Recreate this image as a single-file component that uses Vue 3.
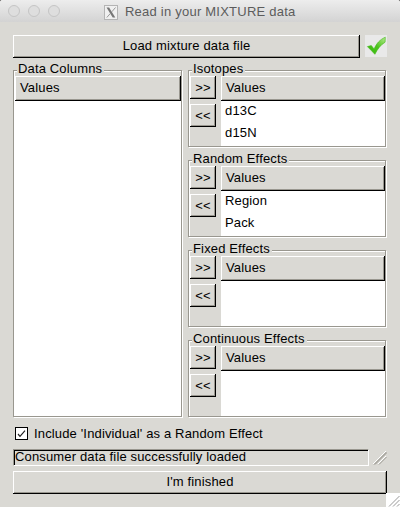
<script setup>
const groups = [
  { title: 'Isotopes', items: ['d13C', 'd15N'] },
  { title: 'Random Effects', items: ['Region', 'Pack'] },
  { title: 'Fixed Effects', items: [] },
  { title: 'Continuous Effects', items: [] },
]
</script>

<template>
  <div class="window">
    <header class="titlebar">
      <i class="light"></i><i class="light"></i><i class="light"></i>
      <svg class="xicon" width="14" height="15" viewBox="0 0 14 15">
        <rect x=".5" y=".5" width="13" height="14" fill="#f0f0f0" stroke="#b4b4b4" />
        <path d="M2.5 2.5h2.6l6.2 10H8.7z" fill="#777" />
        <path d="M11.5 2.5L7.8 6.8M6.3 8.5L2.8 12.5" stroke="#999" fill="none" />
      </svg>
      <span class="title">Read in your MIXTURE data</span>
    </header>
    <main class="content">
      <div class="load-row">
        <button class="btn load">Load mixture data file</button>
        <svg width="22" height="22" viewBox="0 0 22 22">
          <defs>
            <linearGradient id="tick" x1="0" y1="1" x2="1" y2="0">
              <stop offset="0" stop-color="#35b80c" /><stop offset=".5" stop-color="#4cc41c" /><stop offset="1" stop-color="#b4eb8c" />
            </linearGradient>
          </defs>
          <rect width="22" height="22" fill="#e9e9e9" />
          <path d="M2.4 11.6L6.3 10.5L9.1 14C11.5 8.5 14.5 4.8 20.3 2.2L20.1 7.2C15.7 9.7 12.6 14 9.9 19.3C7.8 17.2 5 14.1 2.4 11.6Z" fill="url(#tick)" stroke="#43b51b" stroke-width=".6" />
        </svg>
      </div>
      <div class="panels">
        <section class="panel">
          <span class="legend">Data Columns</span>
          <div class="list"><div class="head">Values</div></div>
        </section>
        <div class="stack">
          <section v-for="g in groups" :key="g.title" class="panel">
            <span class="legend">{{ g.title }}</span>
            <div class="moves">
              <button class="btn">&gt;&gt;</button>
              <button class="btn">&lt;&lt;</button>
            </div>
            <div class="list">
              <div class="head">Values</div>
              <div v-for="i in g.items" :key="i" class="item">{{ i }}</div>
            </div>
          </section>
        </div>
      </div>
      <label class="check">
        <svg width="13" height="13" viewBox="0 0 13 13">
          <rect x=".5" y=".5" width="12" height="12" fill="#fff" stroke="#000" />
          <path d="M3 7l2 2.3L10 3.7" fill="none" stroke="#222" stroke-width="1.2" />
        </svg>
        <span>Include 'Individual' as a Random Effect</span>
      </label>
      <div class="status-row">
        <div class="status">Consumer data file successfully loaded</div>
        <svg width="14" height="14" viewBox="0 0 14 14" fill="none">
          <path d="M0 13L13 0M5 13L13 5" stroke="#fff" />
          <path d="M1 13.5L13.5 1M6 13.5L13.5 6M2 13.5L13.5 2" stroke="#99978f" />
        </svg>
      </div>
      <button class="btn finish">I'm finished</button>
    </main>
    <svg class="corner" width="14" height="14" viewBox="0 0 14 14" fill="none">
      <rect width="14" height="14" fill="#fff" />
      <path d="M3 13.5L13.5 3M7 13.5L13.5 7M11 13.5L13.5 11" stroke="#999" />
    </svg>
  </div>
</template>

<style>
body { margin: 0; background: #000; }
</style>

<style scoped>
.window {
  position: relative;
  width: 400px;
  height: 507px;
  overflow: hidden;
  border-radius: 2px 2px 0 0;
  background: #dad9d4;
  color: #000;
  font-family: "Liberation Sans", Arial, sans-serif;
  font-size: 13px;
  line-height: 15px;
  letter-spacing: .15px;
  white-space: nowrap;
}
.window * { box-sizing: border-box; }
.titlebar {
  display: flex;
  align-items: center;
  height: 22px;
  padding-left: 8px;
  background: linear-gradient(#ededed, #d3d3d3);
  color: #5c5c5c;
}
.light {
  width: 12px;
  height: 12px;
  margin-right: 8px;
  border: 1px solid #c5c5c5;
  border-radius: 50%;
  background: #dedede;
}
.xicon { margin: 2px 7px 0 36px; }
.title { letter-spacing: .23px; margin-top: 1px; }
.content { padding: 13px 13px 0; }
.load-row { display: flex; justify-content: space-between; height: 23px; }
.btn {
  display: block;
  margin: 0;
  padding: 0;
  border: 0;
  border-radius: 0;
  background: #dad9d4;
  color: #000;
  font: inherit;
  letter-spacing: inherit;
  width: 26px;
  height: 23px;
  box-shadow: inset -1px -1px #000, inset 1px 1px #fff, inset -2px -2px #99978f;
}
.load { width: 347px; padding-bottom: 2px; }
.panels { display: flex; justify-content: space-between; margin-top: 12px; height: 347px; }
.panel {
  position: relative;
  display: flex;
  width: 169px;
  height: 347px;
  padding: 5px 0 0 1px;
  border: 1px solid #99978f;
  box-shadow: 1px 1px #fff, inset 1px 1px #fff;
}
.stack { display: flex; flex-direction: column; gap: 13px; width: 199px; }
.stack .panel { width: 198px; height: 77px; }
.legend {
  position: absolute;
  left: 3px;
  top: -10px;
  height: 15px;
  padding: 0 2px 0 1px;
  background: #dad9d4;
}
.moves { display: flex; flex-direction: column; gap: 5px; width: 31px; }
.list { flex: 1; background: #fff; }
.head {
  height: 25px;
  margin-bottom: 2px;
  padding: 4px 0 0 5px;
  background: #dad9d4;
  box-shadow: inset -1px -1px #000, inset 1px 1px #fff, inset -2px -2px #99978f;
}
.item { height: 22px; padding-left: 4px; }
.check { display: flex; align-items: center; gap: 6px; height: 15px; margin: 9px 0 0 2px; }
.check span { margin-top: -1px; }
.status-row { display: flex; justify-content: space-between; margin-top: 8px; height: 17px; }
.status-row svg { margin-top: 2px; }
.status {
  width: 356px;
  height: 17px;
  padding-left: 1px;
  border: 1px solid;
  border-color: #99978f #fff #fff #99978f;
  box-shadow: inset 1px 1px #000;
  line-height: 14px;
}
.finish { width: 374px; margin-top: 5px; padding-bottom: 2px; }
.corner { position: absolute; right: 0; bottom: 0; }
</style>
